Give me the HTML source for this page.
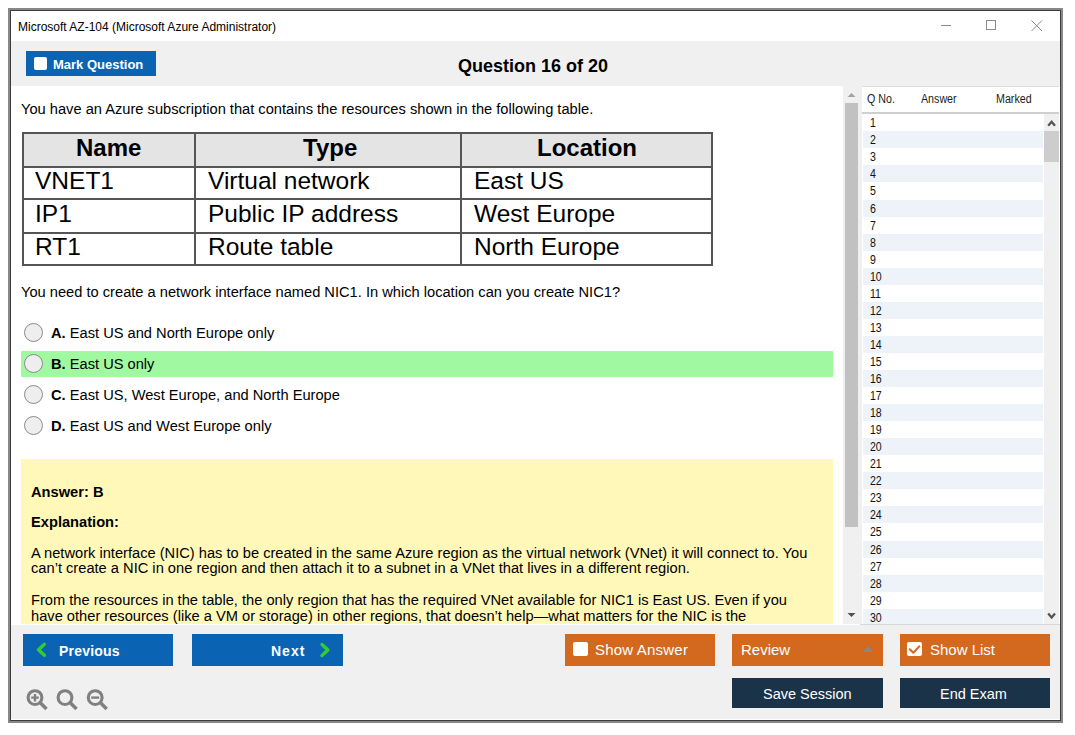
<!DOCTYPE html>
<html><head><meta charset="utf-8">
<style>
html,body{margin:0;padding:0;background:#fff;width:1075px;height:735px;overflow:hidden;font-family:"Liberation Sans",sans-serif;}
.a{position:absolute;}
.t{position:absolute;white-space:nowrap;line-height:1;}
#win{position:absolute;left:8px;top:8px;width:1055px;height:715px;box-sizing:border-box;border:2px solid #888;}
#inner{position:absolute;left:0;top:0;right:0;bottom:0;border:1px solid #3c3c3c;}
.btn-blue{background:#0b64b3;}
.btn-or{background:#d2691e;}
.btn-navy{background:#1b3349;}
.cb{position:absolute;background:#fff;border-radius:2px;}
.q{font-size:14.67px;color:#000;}
.radio{position:absolute;width:17px;height:17px;border:1px solid #8a8a8a;border-radius:50%;background:#eee;}
.tbl-h{position:absolute;background:#e4e4e4;}
.ln{position:absolute;background:#555;}
.row{position:absolute;left:1px;width:180px;height:17px;}
.row.alt{background:#eef3f9;}
.num{position:absolute;left:7px;font-size:12px;line-height:1;color:#111;transform:scaleX(0.88);transform-origin:0 0;}
.hd{font-size:12px;color:#222;transform:scaleX(0.89);transform-origin:0 0;}
</style></head>
<body>
<div id="win"><div id="inner"></div></div>

<!-- title bar -->
<div class="t" style="left:18px;top:21px;font-size:12px;color:#000;">Microsoft AZ-104 (Microsoft Azure Administrator)</div>
<div class="a" style="left:941px;top:25px;width:10px;height:1px;background:#8a8a8a;"></div>
<div class="a" style="left:986px;top:20px;width:8px;height:8px;border:1px solid #8a8a8a;"></div>
<svg class="a" style="left:1031px;top:20px;" width="12" height="12" viewBox="0 0 12 12"><path d="M0.5 0.5L11 11M11 0.5L0.5 11" stroke="#8a8a8a" stroke-width="1"/></svg>

<!-- toolbar -->
<div class="a" style="left:11px;top:41px;width:1049px;height:45px;background:#f0f0f0;"></div>
<div class="a btn-blue" style="left:26px;top:51px;width:130px;height:25px;"></div>
<div class="cb" style="left:34px;top:57px;width:13px;height:13px;"></div>
<div class="t" style="left:53px;top:58px;font-size:13px;font-weight:bold;color:#fff;">Mark Question</div>
<div class="t" style="left:458px;top:57px;font-size:18px;font-weight:bold;color:#000;">Question 16 of 20</div>

<!-- question content -->
<div class="a" style="left:11px;top:86px;width:832px;height:539px;background:#fff;"></div>
<div class="t q" style="left:21px;top:101.5px;">You have an Azure subscription that contains the resources shown in the following table.</div>

<!-- table -->
<div class="tbl-h" style="left:23px;top:133px;width:689px;height:33px;"></div>
<div class="ln" style="left:22px;top:132px;width:691px;height:2px;"></div>
<div class="ln" style="left:22px;top:165.5px;width:691px;height:2px;"></div>
<div class="ln" style="left:22px;top:198px;width:691px;height:2px;"></div>
<div class="ln" style="left:22px;top:231.5px;width:691px;height:2px;"></div>
<div class="ln" style="left:22px;top:264px;width:691px;height:2px;"></div>
<div class="ln" style="left:22px;top:132px;width:2px;height:134px;"></div>
<div class="ln" style="left:194px;top:132px;width:2px;height:134px;"></div>
<div class="ln" style="left:460px;top:132px;width:2px;height:134px;"></div>
<div class="ln" style="left:711px;top:132px;width:2px;height:134px;"></div>
<div class="t" style="left:76px;top:136px;font-size:24px;font-weight:bold;">Name</div>
<div class="t" style="left:303px;top:136px;font-size:24px;font-weight:bold;">Type</div>
<div class="t" style="left:537px;top:136px;font-size:24px;font-weight:bold;">Location</div>
<div class="t" style="left:35px;top:168.8px;font-size:24.5px;">VNET1</div>
<div class="t" style="left:208px;top:168.8px;font-size:24.5px;">Virtual network</div>
<div class="t" style="left:474px;top:168.8px;font-size:24.5px;">East US</div>
<div class="t" style="left:35px;top:201.5px;font-size:24.5px;">IP1</div>
<div class="t" style="left:208px;top:201.5px;font-size:24.5px;">Public IP address</div>
<div class="t" style="left:474px;top:201.5px;font-size:24.5px;">West Europe</div>
<div class="t" style="left:35px;top:235px;font-size:24.5px;">RT1</div>
<div class="t" style="left:208px;top:235px;font-size:24.5px;">Route table</div>
<div class="t" style="left:474px;top:235px;font-size:24.5px;">North Europe</div>

<div class="t q" style="left:21px;top:284.5px;">You need to create a network interface named NIC1. In which location can you create NIC1?</div>

<!-- options -->
<div class="a" style="left:21px;top:351px;width:812px;height:26px;background:#a0f9a0;"></div>
<div class="radio" style="left:24px;top:323px;"></div>
<div class="radio" style="left:24px;top:354px;"></div>
<div class="radio" style="left:24px;top:385px;"></div>
<div class="radio" style="left:24px;top:416px;"></div>
<div class="t q" style="left:51px;top:325.5px;"><b>A.</b> East US and North Europe only</div>
<div class="t q" style="left:51px;top:356.5px;"><b>B.</b> East US only</div>
<div class="t q" style="left:51px;top:387.5px;"><b>C.</b> East US, West Europe, and North Europe</div>
<div class="t q" style="left:51px;top:418.5px;"><b>D.</b> East US and West Europe only</div>

<!-- answer box -->
<div class="a" style="left:21px;top:459px;width:812px;height:165px;background:#fff8b9;"></div>
<div class="t q" style="left:31px;top:484.5px;font-weight:bold;">Answer: B</div>
<div class="t q" style="left:31px;top:514.5px;font-weight:bold;">Explanation:</div>
<div class="t q" style="left:31px;top:545.5px;">A network interface (NIC) has to be created in the same Azure region as the virtual network (VNet) it will connect to. You</div>
<div class="t q" style="left:31px;top:561.4px;">can’t create a NIC in one region and then attach it to a subnet in a VNet that lives in a different region.</div>
<div class="t q" style="left:31px;top:592.5px;">From the resources in the table, the only region that has the required VNet available for NIC1 is East US. Even if you</div>
<div class="t q" style="left:31px;top:608.8px;">have other resources (like a VM or storage) in other regions, that doesn’t help—what matters for the NIC is the</div>

<!-- left scrollbar -->
<div class="a" style="left:843px;top:86px;width:19px;height:538px;background:#f0f0f0;"></div>
<div class="a" style="left:845px;top:103px;width:13px;height:424px;background:#c1c1c1;"></div>
<svg class="a" style="left:847px;top:92px;" width="9" height="6" viewBox="0 0 9 6"><path d="M0.5 5L4.5 1L8.5 5Z" fill="#a3a3a3"/></svg>
<svg class="a" style="left:847px;top:612px;" width="9" height="6" viewBox="0 0 9 6"><path d="M0.5 1L4.5 5L8.5 1Z" fill="#505050"/></svg>

<!-- list panel -->
<div class="a" id="list" style="left:862px;top:86px;width:197px;height:538px;background:#fff;overflow:hidden;">
<div class="a" style="left:0;top:0;width:197px;height:1px;background:#dcdcdc;"></div>
<div class="t hd" style="left:5px;top:7px;">Q No.</div>
<div class="t hd" style="left:58.5px;top:7px;">Answer</div>
<div class="t hd" style="left:134px;top:7px;">Marked</div>
<div class="a" style="left:0;top:26px;width:197px;height:2px;background:#cfcfcf;"></div>
<div class="row" style="top:28.25px;"><div class="num" style="top:3px;">1</div></div>
<div class="row alt" style="top:45.30px;"><div class="num" style="top:3px;">2</div></div>
<div class="row" style="top:62.35px;"><div class="num" style="top:3px;">3</div></div>
<div class="row alt" style="top:79.40px;"><div class="num" style="top:3px;">4</div></div>
<div class="row" style="top:96.45px;"><div class="num" style="top:3px;">5</div></div>
<div class="row alt" style="top:113.50px;"><div class="num" style="top:3px;">6</div></div>
<div class="row" style="top:130.55px;"><div class="num" style="top:3px;">7</div></div>
<div class="row alt" style="top:147.60px;"><div class="num" style="top:3px;">8</div></div>
<div class="row" style="top:164.65px;"><div class="num" style="top:3px;">9</div></div>
<div class="row alt" style="top:181.70px;"><div class="num" style="top:3px;">10</div></div>
<div class="row" style="top:198.75px;"><div class="num" style="top:3px;">11</div></div>
<div class="row alt" style="top:215.80px;"><div class="num" style="top:3px;">12</div></div>
<div class="row" style="top:232.85px;"><div class="num" style="top:3px;">13</div></div>
<div class="row alt" style="top:249.90px;"><div class="num" style="top:3px;">14</div></div>
<div class="row" style="top:266.95px;"><div class="num" style="top:3px;">15</div></div>
<div class="row alt" style="top:284.00px;"><div class="num" style="top:3px;">16</div></div>
<div class="row" style="top:301.05px;"><div class="num" style="top:3px;">17</div></div>
<div class="row alt" style="top:318.10px;"><div class="num" style="top:3px;">18</div></div>
<div class="row" style="top:335.15px;"><div class="num" style="top:3px;">19</div></div>
<div class="row alt" style="top:352.20px;"><div class="num" style="top:3px;">20</div></div>
<div class="row" style="top:369.25px;"><div class="num" style="top:3px;">21</div></div>
<div class="row alt" style="top:386.30px;"><div class="num" style="top:3px;">22</div></div>
<div class="row" style="top:403.35px;"><div class="num" style="top:3px;">23</div></div>
<div class="row alt" style="top:420.40px;"><div class="num" style="top:3px;">24</div></div>
<div class="row" style="top:437.45px;"><div class="num" style="top:3px;">25</div></div>
<div class="row alt" style="top:454.50px;"><div class="num" style="top:3px;">26</div></div>
<div class="row" style="top:471.55px;"><div class="num" style="top:3px;">27</div></div>
<div class="row alt" style="top:488.60px;"><div class="num" style="top:3px;">28</div></div>
<div class="row" style="top:505.65px;"><div class="num" style="top:3px;">29</div></div>
<div class="row alt" style="top:522.70px;"><div class="num" style="top:3px;">30</div></div>
<div class="a" style="left:182px;top:28px;width:15px;height:510px;background:#f0f0f0;"></div>
<div class="a" style="left:182px;top:45px;width:15px;height:31px;background:#cdcdcd;"></div>
<svg class="a" style="left:185px;top:33px;" width="9" height="8" viewBox="0 0 9 8"><path d="M1.2 6.8L4.6 2.8L8 6.8" stroke="#555" stroke-width="2.3" fill="none"/></svg>
<svg class="a" style="left:185px;top:526px;" width="9" height="8" viewBox="0 0 9 8"><path d="M1.2 1.4L4.6 5.4L8 1.4" stroke="#555" stroke-width="2.3" fill="none"/></svg>
</div>

<!-- bottom bar -->
<div class="a" style="left:11px;top:625px;width:1049px;height:94px;background:#f0f0f0;"></div>
<div class="a btn-blue" style="left:23px;top:634px;width:150px;height:32px;"></div>
<div class="t" style="left:59px;top:644px;font-size:14px;font-weight:bold;letter-spacing:0.2px;color:#fff;">Previous</div>
<div class="a btn-blue" style="left:192px;top:634px;width:151px;height:32px;"></div>
<div class="t" style="left:271px;top:644px;font-size:14px;font-weight:bold;letter-spacing:1px;color:#fff;">Next</div>
<svg class="a" style="left:30px;top:636px;" width="50" height="28" viewBox="30 636 50 28"><path d="M44.4 644.3L38.5 649.8L44.4 655.3" stroke="#32cd32" stroke-width="3.4" stroke-linecap="round" stroke-linejoin="round" fill="none"/></svg>
<svg class="a" style="left:310px;top:636px;" width="30" height="28" viewBox="310 636 30 28"><path d="M322 644.5L327.9 650L322 655.5" stroke="#32cd32" stroke-width="3.4" stroke-linecap="round" stroke-linejoin="round" fill="none"/></svg>

<div class="a btn-or" style="left:565px;top:634px;width:150px;height:32px;"></div>
<div class="cb" style="left:573px;top:642px;width:15px;height:14px;"></div>
<div class="t" style="left:595px;top:642px;font-size:15px;letter-spacing:0.2px;color:#fff;">Show Answer</div>

<div class="a btn-or" style="left:732px;top:634px;width:151px;height:32px;"></div>
<div class="t" style="left:741px;top:642px;font-size:15px;color:#fff;">Review</div>
<svg class="a" style="left:862px;top:645px;" width="12" height="8" viewBox="0 0 12 8"><path d="M1.5 6.5L6 1.8L10.5 6.5Z" fill="#888" stroke="#888" stroke-width="1" stroke-linejoin="round"/></svg>

<div class="a btn-or" style="left:900px;top:634px;width:150px;height:32px;"></div>
<div class="cb" style="left:907px;top:642px;width:15px;height:14px;"></div>
<svg class="a" style="left:907px;top:642px;" width="15" height="14" viewBox="0 0 15 14"><path d="M2.8 7.3L6.3 10.7L12.3 4.4" stroke="#d2691e" stroke-width="2.1" stroke-linecap="round" stroke-linejoin="round" fill="none"/></svg>
<div class="t" style="left:930px;top:642px;font-size:15px;color:#fff;">Show List</div>

<div class="a btn-navy" style="left:732px;top:678px;width:151px;height:30px;"></div>
<div class="t" style="left:763px;top:687px;font-size:14.5px;color:#fff;">Save Session</div>
<div class="a btn-navy" style="left:900px;top:678px;width:150px;height:30px;"></div>
<div class="t" style="left:940px;top:687px;font-size:14.5px;color:#fff;">End Exam</div>

<!-- zoom icons -->
<svg class="a" style="left:22px;top:684px;" width="90" height="30" viewBox="0 0 90 30">
  <g stroke="#808080" fill="none">
    <circle cx="13" cy="13.6" r="6.9" stroke-width="3.1"/><path d="M18 18.6L24.5 25" stroke-width="3.5"/>
    <path d="M13 10V17.5M9.2 13.6H16.8" stroke-width="2.4"/>
    <circle cx="43" cy="13.6" r="6.9" stroke-width="3.1"/><path d="M48 18.6L54.5 25" stroke-width="3.5"/>
    <circle cx="73.2" cy="13.6" r="6.9" stroke-width="3.1"/><path d="M78.2 18.6L84.7 25" stroke-width="3.5"/>
    <path d="M69.2 13.6H77.2" stroke-width="2.4"/>
  </g>
</svg>
<div class="a" style="left:860px;top:624px;width:200px;height:1px;background:#d8d8d8;"></div>
</body></html>
